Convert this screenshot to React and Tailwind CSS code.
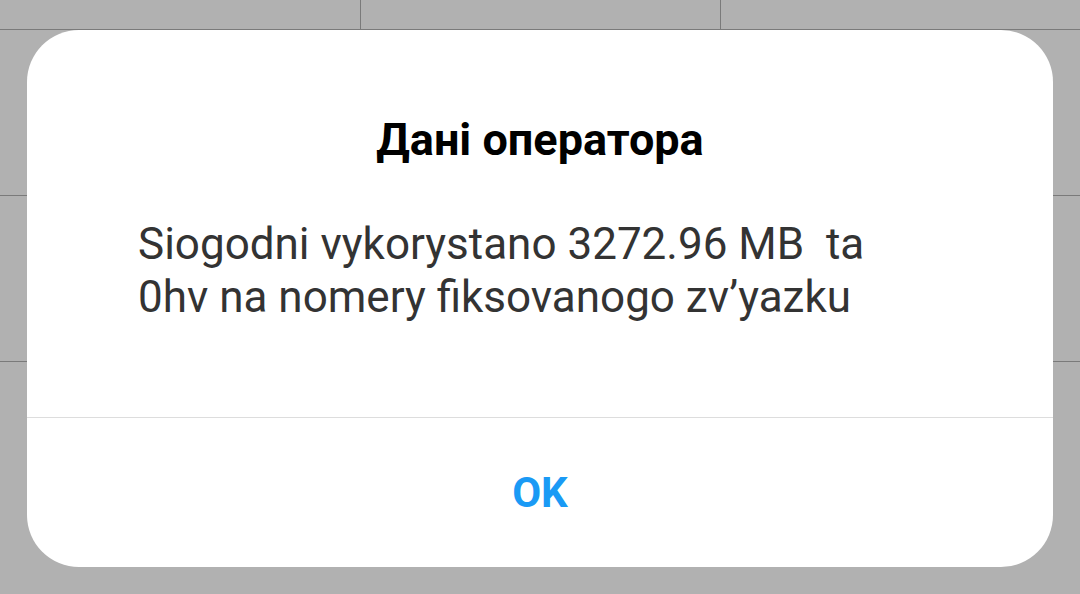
export default function App() {
  const rows = [0, 1, 2, 3];
  return (
    <div className="relative w-[1080px] h-[594px] overflow-hidden bg-[#b1b1b1]" style={{ fontFamily: 'Roboto, "Noto Sans", sans-serif' }}>
      <div className="absolute left-0 top-[-136px] w-[1082px] grid grid-cols-3">
        {rows.flatMap((r) =>
          [0, 1, 2].map((c) => (
            <div key={`${r}-${c}`} className={`h-[166px] border-r border-[#7a7a7a] ${r < 3 ? 'border-b' : ''}`} />
          ))
        )}
      </div>
      <div className="absolute left-[27px] top-[30px] w-[1026px] h-[537px] bg-white rounded-[52px] flex flex-col">
        <div className="flex-1 flex flex-col">
          <h1 className="mt-[82px] text-center text-[45px] leading-[56px] font-bold text-black">Дані оператора</h1>
          <p className="mt-[50px] pl-[111px] pr-[30px] text-[44px] leading-[53px] text-[#333333]">
            Siogodni vykorystano 3272.96 MB&nbsp; ta<br />0hv na nomery fiksovanogo zv’yazku
          </p>
        </div>
        <div className="h-[150px] border-t border-[#dddddd] flex items-center justify-center">
          <span className="text-[42px] font-bold text-[#1a9af5] leading-none">OK</span>
        </div>
      </div>
    </div>
  );
}
